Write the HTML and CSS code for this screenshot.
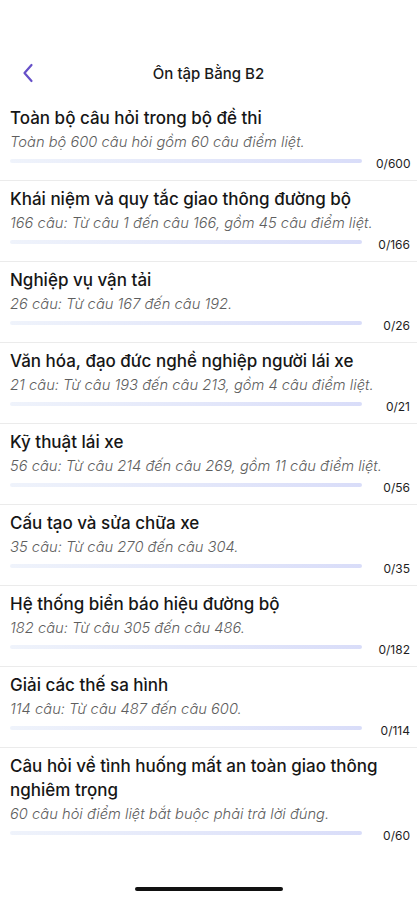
FILE: index.html
```html
<!DOCTYPE html>
<html lang="vi">
<head>
    <meta charset="UTF-8">
    <meta name="viewport" content="width=device-width, initial-scale=1.0">
    <title>Ôn tập Bằng B2</title>
    <link rel="stylesheet" href="styles.css">
</head>
<body>
    <div class="header">
        <button class="back" aria-label="Quay lại">
            <svg width="12" height="20" viewBox="0 0 12 20"><path d="M9.5 2 L2.5 10 L9.5 18" fill="none" stroke="#6650c8" stroke-width="2.2" stroke-linecap="round" stroke-linejoin="round"/></svg>
        </button>
        <div class="title">Ôn tập Bằng B2</div>
    </div>

    <div class="list">
        <div class="item">
            <div class="item-title">Toàn bộ câu hỏi trong bộ đề thi</div>
            <div class="item-desc">Toàn bộ 600 câu hỏi gồm 60 câu điểm liệt.</div>
            <div class="progress"><div class="bar"></div><span class="count">0/600</span></div>
        </div>
        <div class="item">
            <div class="item-title">Khái niệm và quy tắc giao thông đường bộ</div>
            <div class="item-desc">166 câu: Từ câu 1 đến câu 166, gồm 45 câu điểm liệt.</div>
            <div class="progress"><div class="bar"></div><span class="count">0/166</span></div>
        </div>
        <div class="item">
            <div class="item-title">Nghiệp vụ vận tải</div>
            <div class="item-desc">26 câu: Từ câu 167 đến câu 192.</div>
            <div class="progress"><div class="bar"></div><span class="count">0/26</span></div>
        </div>
        <div class="item">
            <div class="item-title">Văn hóa, đạo đức nghề nghiệp người lái xe</div>
            <div class="item-desc">21 câu: Từ câu 193 đến câu 213, gồm 4 câu điểm liệt.</div>
            <div class="progress"><div class="bar"></div><span class="count">0/21</span></div>
        </div>
        <div class="item">
            <div class="item-title">Kỹ thuật lái xe</div>
            <div class="item-desc">56 câu: Từ câu 214 đến câu 269, gồm 11 câu điểm liệt.</div>
            <div class="progress"><div class="bar"></div><span class="count">0/56</span></div>
        </div>
        <div class="item">
            <div class="item-title">Cấu tạo và sửa chữa xe</div>
            <div class="item-desc">35 câu: Từ câu 270 đến câu 304.</div>
            <div class="progress"><div class="bar"></div><span class="count">0/35</span></div>
        </div>
        <div class="item">
            <div class="item-title">Hệ thống biển báo hiệu đường bộ</div>
            <div class="item-desc">182 câu: Từ câu 305 đến câu 486.</div>
            <div class="progress"><div class="bar"></div><span class="count">0/182</span></div>
        </div>
        <div class="item">
            <div class="item-title">Giải các thế sa hình</div>
            <div class="item-desc">114 câu: Từ câu 487 đến câu 600.</div>
            <div class="progress"><div class="bar"></div><span class="count">0/114</span></div>
        </div>
        <div class="item">
            <div class="item-title">Câu hỏi về tình huống mất an toàn giao thông nghiêm trọng</div>
            <div class="item-desc">60 câu hỏi điểm liệt bắt buộc phải trả lời đúng.</div>
            <div class="progress"><div class="bar"></div><span class="count">0/60</span></div>
        </div>
    </div>

    <div class="home-indicator"></div>
</body>
</html>
```

FILE: styles.css
```css
body {
    margin: 0;
    padding-top: 50px;
    font-family: Inter, "Noto Sans", sans-serif;
    background-color: #fff;
    color: #1a1a1a;
}
.header {
    height: 46px;
    margin-bottom: 4px;
    display: flex;
    align-items: center;
    justify-content: center;
    position: relative;
}
.back {
    position: absolute;
    left: 16px;
    top: 9px;
    width: 24px;
    height: 28px;
    border: none;
    background: none;
    padding: 0;
    display: flex;
    align-items: center;
    justify-content: center;
    cursor: pointer;
}
.title {
    font-size: 15px;
    font-weight: 500;
}
.item {
    padding: 6px 7px 10px 10px;
    border-bottom: 1px solid #ebebeb;
}
.item:last-child {
    border-bottom: none;
}
.item-title {
    font-size: 17px;
    line-height: 24px;
    font-weight: 500;
    color: #161616;
}
.item-desc {
    font-size: 14.7px;
    line-height: 20px;
    font-style: italic;
    font-weight: 300;
    color: #5e5e5e;
    margin-top: 2px;
}
.progress {
    display: flex;
    align-items: center;
    height: 18px;
}
.bar {
    flex: 1;
    height: 4px;
    border-radius: 2px;
    background: linear-gradient(to right, #eff3fb, #d9ddf9);
    margin-right: 14px;
}
.count {
    font-size: 12px;
    font-weight: 400;
    color: #1e1e1e;
    width: 34px;
    text-align: right;
    padding-top: 4px;
}
.home-indicator {
    position: fixed;
    bottom: 9px;
    left: 50%;
    width: 148px;
    height: 4px;
    margin-left: -74px;
    border-radius: 2px;
    background-color: #111;
}
```
